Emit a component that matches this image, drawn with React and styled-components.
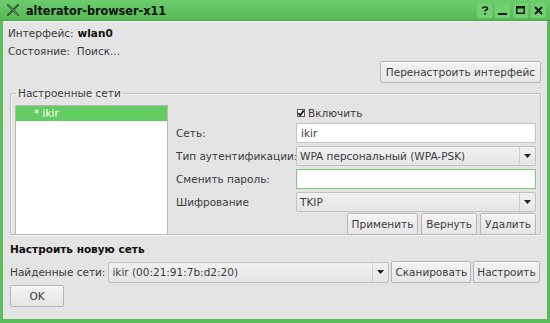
import React from "react";
import styled, { createGlobalStyle } from "styled-components";

const Global = createGlobalStyle`
  html, body { margin: 0; padding: 0; background: #e4e4e4; }
  body { font-family: "DejaVu Sans", "Liberation Sans", sans-serif; font-size: 10.5px; color: #3a3a3a; }
  * { box-sizing: border-box; }
`;

const Window = styled.div`
  width: 550px;
  height: 323px;
  display: flex;
  flex-direction: column;
  background: #e4e4e4;
  border: 3px solid #5cbc5c;
  border-bottom-width: 4px;
  border-top: none;
`;

const TitleBar = styled.div`
  height: 21px;
  margin: 0 -3px;
  display: flex;
  align-items: center;
  padding: 0 4px 0 7px;
  background: linear-gradient(#6ccc6c, #55b955);
  border-bottom: 1px solid #4aa64a;
`;

const TitleText = styled.div`
  flex: 1;
  margin-left: 7px;
  font-family: "DejaVu Sans Condensed", "DejaVu Sans", sans-serif;
  font-stretch: condensed;
  font-weight: bold;
  font-size: 12.5px;
  color: #111;
`;

const TitleBtn = styled.div`
  width: 15px;
  height: 15px;
  margin-left: 3px;
  background: #72cf72;
  display: flex;
  align-items: center;
  justify-content: center;
`;

const Body = styled.div`
  flex: 1;
  display: flex;
  flex-direction: column;
  padding: 2px 6px 0 5px;
  border-top: 1px solid #f4f4f4;
`;

const InfoLine = styled.div`
  height: 18px;
  display: flex;
  align-items: center;
  gap: 4px;
`;

const Strong = styled.span`
  font-weight: bold;
  color: #111;
`;

const RightRow = styled.div`
  display: flex;
  justify-content: flex-end;
  margin-top: 1px;
`;

const Button = styled.button`
  font-family: inherit;
  font-size: 10.5px;
  color: #3a3a3a;
  height: ${(p) => p.$h || 22}px;
  padding: 0 ${(p) => p.$px ?? 4}px;
  min-width: ${(p) => p.$w || 0}px;
  background: linear-gradient(#f3f3f3, #e6e6e6);
  border: 1px solid #b5b5b5;
  border-radius: 2px;
  box-shadow: inset 0 1px 0 #fff;
  display: flex;
  align-items: center;
  justify-content: center;
  white-space: nowrap;
  flex-shrink: 0;
`;

const Group = styled.fieldset`
  margin: 4px 0 0 2px;
  padding: 6px 4px 3px 4px;
  border: 1px solid #bdbdbd;
  border-radius: 2px;
  box-shadow: inset 1px 1px 0 #f6f6f6, 1px 1px 0 #f6f6f6;
  display: flex;
  gap: 8px;
  height: 148px;
`;

const Legend = styled.legend`
  padding: 0 2px;
  margin-left: 1px;
  color: #3a3a3a;
`;

const ListBox = styled.div`
  width: 153px;
  background: #fff;
  border: 1px solid #b8b8b8;
  display: flex;
  flex-direction: column;
`;

const ListItem = styled.div`
  height: 15px;
  line-height: 15px;
  padding-left: 18px;
  background: ${(p) => (p.$sel ? "#62cc62" : "transparent")};
  color: ${(p) => (p.$sel ? "#fff" : "#3a3a3a")};
`;

const Form = styled.div`
  flex: 1;
  display: grid;
  grid-template-columns: 120px 1fr;
  row-gap: 3px;
  align-items: center;
  align-content: start;
`;

const Label = styled.div`
  white-space: nowrap;
`;

const CheckRow = styled.label`
  grid-column: 2;
  height: 15px;
  display: flex;
  align-items: center;
  gap: 3px;
  padding-left: 1px;
`;

const Check = styled.span`
  width: 8px;
  height: 8px;
  display: inline-flex;
  align-items: center;
  justify-content: center;
  background: #fff;
  border: 1px solid #555;
`;

const Input = styled.div`
  height: 20px;
  background: #fff;
  border: 1px solid ${(p) => (p.$focus ? "#7ccc7c" : "#c4c4c4")};
  padding: 0 4px;
  display: flex;
  align-items: center;
  color: #3a3a3a;
`;

const Select = styled.div`
  height: ${(p) => p.$h || 20}px;
  display: flex;
  align-items: stretch;
  background: linear-gradient(#f1f1f1, #e5e5e5);
  border: 1px solid #c0c0c0;
  border-radius: 2px;
  flex-shrink: 0;
  ${(p) => (p.$w ? `width: ${p.$w}px;` : "")}
`;

const SelectText = styled.div`
  flex: 1;
  padding: 0 3px;
  display: flex;
  align-items: center;
  white-space: nowrap;
`;

const SelectArrow = styled.div`
  width: 16px;
  border-left: 1px solid #cfcfcf;
  display: flex;
  align-items: center;
  justify-content: center;
`;

const ButtonRow = styled.div`
  grid-column: 1 / span 2;
  display: flex;
  justify-content: flex-end;
  gap: 3px;
  margin-top: -2px;
`;

const Heading = styled.div`
  margin-top: 7px;
  height: 14px;
  display: flex;
  align-items: center;
  font-weight: bold;
  color: #111;
  padding-left: 2px;
`;

const FoundRow = styled.div`
  display: flex;
  align-items: center;
  gap: 2px;
  margin-top: 5px;
  padding-left: 2px;
  white-space: nowrap;
`;

const FoundLabel = styled.span`
  margin-right: 1px;
`;

const OkRow = styled.div`
  margin-top: 2px;
  padding-left: 2px;
  display: flex;
`;

const Arrow = () => (
  <svg width="7" height="4" viewBox="0 0 7 4">
    <path d="M0 0h7L3.5 4z" fill="#222" />
  </svg>
);

export default function App() {
  return (
    <>
      <Global />
      <Window>
        <TitleBar>
          <svg width="12" height="12" viewBox="0 0 12 12">
            <path d="M1 1L11 11M11 1L1 11" stroke="#3a5a3a" strokeWidth="2.2" strokeLinecap="round" />
            <path d="M1 1L11 11" stroke="#6f8f6f" strokeWidth="1" />
          </svg>
          <TitleText>alterator-browser-x11</TitleText>
          <TitleBtn>
            <svg width="8" height="9" viewBox="0 0 8 9">
              <path d="M1.5 2.5C1.5 0.5 6.5 0.5 6.5 2.5C6.5 4 4 4 4 5.5" stroke="#1a1a1a" strokeWidth="1.6" fill="none" />
              <rect x="3.2" y="7" width="1.6" height="1.6" fill="#1a1a1a" />
            </svg>
          </TitleBtn>
          <TitleBtn>
            <svg width="9" height="9" viewBox="0 0 9 9">
              <rect x="0" y="7" width="9" height="2" fill="#1a1a1a" />
            </svg>
          </TitleBtn>
          <TitleBtn>
            <svg width="9" height="8" viewBox="0 0 9 8">
              <rect x="0.75" y="0.75" width="7.5" height="6.5" stroke="#1a1a1a" strokeWidth="1.5" fill="none" />
              <rect x="0" y="0" width="9" height="2.5" fill="#1a1a1a" />
            </svg>
          </TitleBtn>
          <TitleBtn>
            <svg width="9" height="9" viewBox="0 0 9 9">
              <path d="M1 1L8 8M8 1L1 8" stroke="#1a1a1a" strokeWidth="2" />
            </svg>
          </TitleBtn>
        </TitleBar>
        <Body>
          <InfoLine>
            Интерфейс: <Strong>wlan0</Strong>
          </InfoLine>
          <InfoLine>Состояние:&nbsp; Поиск...</InfoLine>
          <RightRow>
            <Button $px={5}>Перенастроить интерфейс</Button>
          </RightRow>
          <Group>
            <Legend>Настроенные сети</Legend>
            <ListBox>
              <ListItem $sel>* ikir</ListItem>
            </ListBox>
            <Form>
              <CheckRow>
                <Check>
                  <svg width="6" height="6" viewBox="0 0 6 6">
                    <path d="M0.3 3L2.3 5.3L5.7 0.5" stroke="#111" strokeWidth="1.8" fill="none" />
                  </svg>
                </Check>
                Включить
              </CheckRow>
              <Label>Сеть:</Label>
              <Input>ikir</Input>
              <Label>Тип аутентификации:</Label>
              <Select>
                <SelectText>WPA персональный (WPA-PSK)</SelectText>
                <SelectArrow>
                  <Arrow />
                </SelectArrow>
              </Select>
              <Label>Сменить пароль:</Label>
              <Input $focus />
              <Label>Шифрование</Label>
              <Select>
                <SelectText>TKIP</SelectText>
                <SelectArrow>
                  <Arrow />
                </SelectArrow>
              </Select>
              <ButtonRow>
                <Button>Применить</Button>
                <Button>Вернуть</Button>
                <Button>Удалить</Button>
              </ButtonRow>
            </Form>
          </Group>
          <Heading>Настроить новую сеть</Heading>
          <FoundRow>
            <FoundLabel>Найденные сети:</FoundLabel>
            <Select $w={281} $h={21}>
              <SelectText>ikir (00:21:91:7b:d2:20)</SelectText>
              <SelectArrow>
                <Arrow />
              </SelectArrow>
            </Select>
            <Button $px={3}>Сканировать</Button>
            <Button $px={3}>Настроить</Button>
          </FoundRow>
          <OkRow>
            <Button $w={54}>OK</Button>
          </OkRow>
        </Body>
      </Window>
    </>
  );
}
